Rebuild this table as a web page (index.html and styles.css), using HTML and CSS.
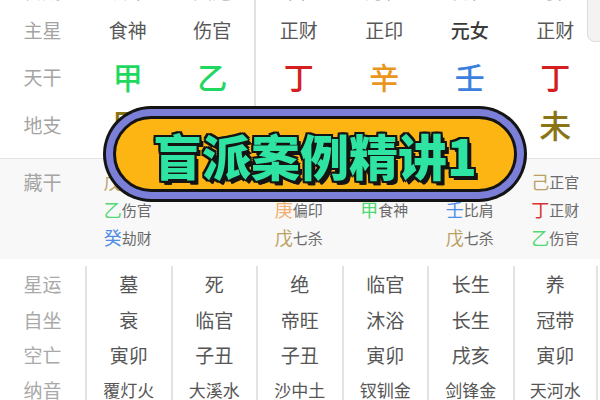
FILE: index.html
```html
<!DOCTYPE html>
<html lang="zh">
<head>
<meta charset="utf-8">
<link rel="stylesheet" href="styles.css">
</head>
<body>
<div class="page">
  <section class="top">
    <div class="col label">
      <div class="c h">日期</div>
      <div class="c r1">主星</div>
      <div class="c r2">天干</div>
      <div class="c r3">地支</div>
    </div>
    <div class="col">
      <div class="c h">流年</div>
      <div class="c r1 v">食神</div>
      <div class="c r2 gan wood">甲</div>
      <div class="c r3 zhi earth">辰</div>
    </div>
    <div class="col sep">
      <div class="c h">大运</div>
      <div class="c r1 v">伤官</div>
      <div class="c r2 gan wood">乙</div>
      <div class="c r3 zhi metal">酉</div>
    </div>
    <div class="col">
      <div class="c h">年柱</div>
      <div class="c r1 v">正财</div>
      <div class="c r2 gan fire">丁</div>
      <div class="c r3 zhi fire">巳</div>
    </div>
    <div class="col">
      <div class="c h">月柱</div>
      <div class="c r1 v">正印</div>
      <div class="c r2 gan metal">辛</div>
      <div class="c r3 zhi water">亥</div>
    </div>
    <div class="col">
      <div class="c h">日柱</div>
      <div class="c r1 v dm">元女</div>
      <div class="c r2 gan water">壬</div>
      <div class="c r3 zhi metal">申</div>
    </div>
    <div class="col">
      <div class="c h">时柱</div>
      <div class="c r1 v">正财</div>
      <div class="c r2 gan fire">丁</div>
      <div class="c r3 zhi earth">未</div>
    </div>
  </section>

  <section class="cang">
    <div class="col label">
      <div class="row">藏干</div>
    </div>
    <div class="col">
      <div class="row"><span class="s earth-l">戊</span><span class="t">七杀</span></div>
      <div class="row"><span class="s wood-l">乙</span><span class="t">伤官</span></div>
      <div class="row"><span class="s water-l">癸</span><span class="t">劫财</span></div>
    </div>
    <div class="col">
      <div class="row"><span class="s metal-l">辛</span><span class="t">正印</span></div>
    </div>
    <div class="col">
      <div class="row"><span class="s fire-l">丙</span><span class="t">偏财</span></div>
      <div class="row"><span class="s metal-l">庚</span><span class="t">偏印</span></div>
      <div class="row"><span class="s earth-l">戊</span><span class="t">七杀</span></div>
    </div>
    <div class="col">
      <div class="row"><span class="s water-l">壬</span><span class="t">比肩</span></div>
      <div class="row"><span class="s wood-l">甲</span><span class="t">食神</span></div>
    </div>
    <div class="col">
      <div class="row"><span class="s metal-l">庚</span><span class="t">偏印</span></div>
      <div class="row"><span class="s water-l">壬</span><span class="t">比肩</span></div>
      <div class="row"><span class="s earth-l">戊</span><span class="t">七杀</span></div>
    </div>
    <div class="col">
      <div class="row"><span class="s earth-l">己</span><span class="t">正官</span></div>
      <div class="row"><span class="s fire-l">丁</span><span class="t">正财</span></div>
      <div class="row"><span class="s wood-l">乙</span><span class="t">伤官</span></div>
    </div>
  </section>

  <section class="bottom">
    <div class="col label">
      <div class="b">星运</div>
      <div class="b">自坐</div>
      <div class="b">空亡</div>
      <div class="b">纳音</div>
    </div>
    <div class="col line">
      <div class="b">墓</div>
      <div class="b">衰</div>
      <div class="b">寅卯</div>
      <div class="b ny">覆灯火</div>
    </div>
    <div class="col line">
      <div class="b">死</div>
      <div class="b">临官</div>
      <div class="b">子丑</div>
      <div class="b ny">大溪水</div>
    </div>
    <div class="col line">
      <div class="b">绝</div>
      <div class="b">帝旺</div>
      <div class="b">子丑</div>
      <div class="b ny">沙中土</div>
    </div>
    <div class="col line">
      <div class="b">临官</div>
      <div class="b">沐浴</div>
      <div class="b">寅卯</div>
      <div class="b ny">钗钏金</div>
    </div>
    <div class="col line">
      <div class="b">长生</div>
      <div class="b">长生</div>
      <div class="b">戌亥</div>
      <div class="b ny">剑锋金</div>
    </div>
    <div class="col line last">
      <div class="b">养</div>
      <div class="b">冠带</div>
      <div class="b">寅卯</div>
      <div class="b ny">天河水</div>
    </div>
  </section>

  <div class="scroll"></div>

  <div class="banner">
    <div class="banner-mid">
      <div class="banner-in">
        <span class="banner-text">盲派案例精讲1</span>
      </div>
    </div>
  </div>
</div>
</body>
</html>
```

FILE: styles.css
```css
html, body {
  margin: 0;
  padding: 0;
  background: #ffffff;
}
body {
  font-family: "Noto Sans CJK SC", "Noto Sans", sans-serif;
  overflow: hidden;
}
.page {
  position: relative;
  width: 600px;
  height: 400px;
  overflow: hidden;
}
.col {
  width: 85.5px;
  flex: none;
  display: flex;
  flex-direction: column;
  box-sizing: border-box;
}
.col.label {
  width: 85px;
}

/* top section */
.top {
  display: flex;
  margin-top: -25px;
  border-bottom: 1px solid #e3e3e3;
}
.top .c {
  display: flex;
  align-items: center;
  justify-content: center;
  line-height: 1;
  box-sizing: border-box;
}
.top .sep {
  border-right: 2px solid #e2e2e2;
}
.h {
  height: 37px;
  padding-bottom: 6px;
  font-size: 19px;
  color: #9a9a9a;
}
.r1 {
  height: 34px;
  font-size: 19px;
}
.r2 {
  height: 60px;
  font-size: 30px;
}
.r3 {
  height: 52px;
  padding-bottom: 16px;
  font-size: 32px;
}
.label .c {
  font-size: 19px;
  color: #a4a4a4;
}
.v {
  color: #575757;
}
.v.dm {
  color: #3a3a3a;
  font-weight: 500;
}
.gan, .zhi {
  font-weight: 500;
}
.wood { color: #1fd860; }
.fire { color: #d31f1f; }
.metal { color: #ea951d; }
.water { color: #3c80de; }
.earth { color: #8a7516; }

/* hidden stems */
.cang {
  display: flex;
  background: #f8f8f8;
  padding: 8px 0;
}
.cang .row {
  height: 28px;
  display: flex;
  align-items: center;
  justify-content: center;
  line-height: 1;
}
.cang .label .row {
  font-size: 19px;
  color: #a4a4a4;
}
.s {
  font-size: 18px;
}
.t {
  font-size: 15px;
  color: #6a6a6a;
}
.wood-l { color: #4fd874; }
.fire-l { color: #d83434; }
.metal-l { color: #f2ae6c; }
.water-l { color: #4f8de6; }
.earth-l { color: #bba166; }

/* bottom */
.bottom {
  display: flex;
  padding-top: 7px;
}
.bottom .line {
  border-left: 2px solid #e3e3e3;
}
.bottom .line.last {
  border-right: 2px solid #e3e3e3;
}
.b {
  height: 35.4px;
  display: flex;
  align-items: center;
  justify-content: center;
  line-height: 1;
  font-size: 19px;
  color: #555555;
}
.bottom .label .b {
  color: #a9a9a9;
}
.b.ny {
  font-size: 17px;
}

/* overlay scrollbar */
.scroll {
  position: absolute;
  right: -6px;
  top: -8px;
  width: 17px;
  height: 48px;
  background: #f3f3f3;
  border: 1px solid #dcdcdc;
  border-radius: 8px;
}

/* banner */
.banner {
  position: absolute;
  left: 103px;
  top: 106px;
  width: 424px;
  height: 96px;
  box-sizing: border-box;
  padding: 3px;
  border-radius: 48px;
  background: #141414;
}
.banner-mid {
  height: 100%;
  box-sizing: border-box;
  padding: 7px;
  border-radius: 45px;
  background: #7b7fd8;
}
.banner-in {
  height: 100%;
  box-sizing: border-box;
  border: 3px solid #141414;
  border-radius: 38px;
  background: #fdb514;
  display: flex;
  align-items: center;
  justify-content: center;
}
.banner-text {
  font-size: 49px;
  font-weight: 900;
  line-height: 1;
  color: #2fe3a3;
  text-shadow:
    -2px -2px 0 #141414,
    2px -2px 0 #141414,
    -2px 2px 0 #141414,
    2px 2px 0 #141414,
    0 -2px 0 #141414,
    0 2px 0 #141414,
    -2px 0 0 #141414,
    2px 0 0 #141414,
    3px 4px 0 #141414,
    4px 4px 0 #141414;
}
```
